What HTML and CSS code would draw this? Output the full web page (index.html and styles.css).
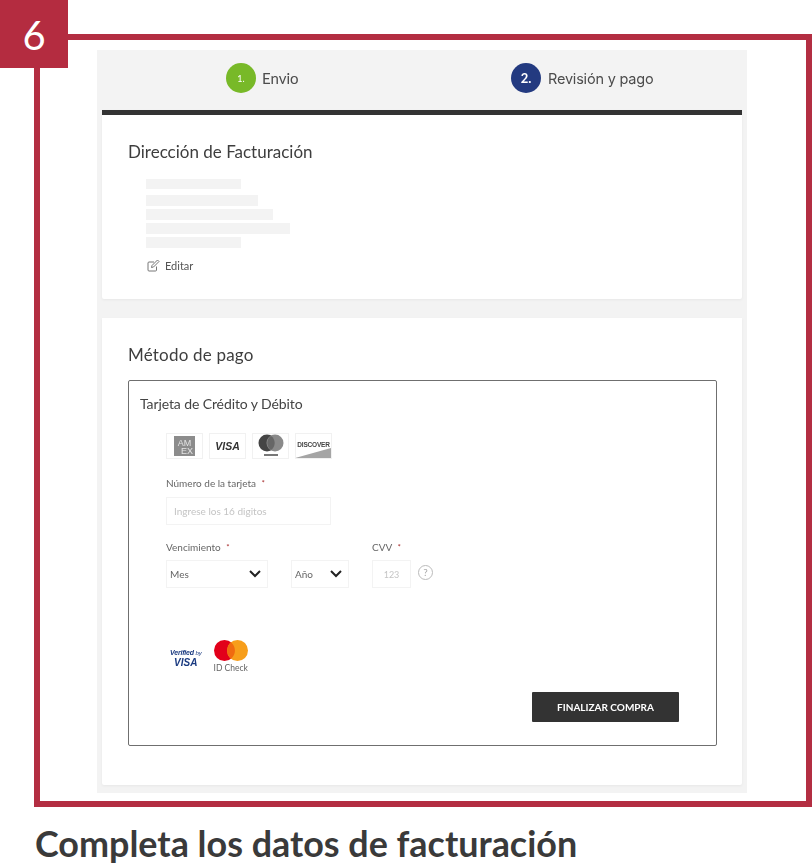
FILE: index.html
```html
<!DOCTYPE html>
<html lang="es">
<head>
<meta charset="utf-8">
<title>Completa los datos de facturación</title>
<link rel="stylesheet" href="styles.css">
</head>
<body>
<div class="badge">6</div>
<main class="frame">
  <div class="panel">
    <header class="steps">
      <div class="step step-one"><span class="dot dot-green">1.</span><span class="step-name">Envio</span></div>
      <div class="step step-two"><span class="dot dot-blue">2.</span><span class="step-name step-name-mont">Revisión y pago</span></div>
    </header>
    <section class="card card-address">
      <h2 class="card-title card-title-long">Dirección de Facturación</h2>
      <div class="address">
        <div class="line line-a"></div>
        <div class="line line-b"></div>
        <div class="line line-c"></div>
        <div class="line line-d"></div>
        <div class="line line-a"></div>
      </div>
      <div class="edit">
        <svg class="edit-icon" width="13" height="13" viewBox="0 0 13 13" fill="none" stroke="#777" stroke-width="1"><path d="M9.500 7.500v3.500a1 1 0 0 1-1 1h-6.500a1 1 0 0 1-1-1v-7a1 1 0 0 1 1-1h5"/><path d="M5 6.500l5.500-5.500 1.500 1.500-5.500 5.500-2 .5z"/></svg>
        <span>Editar</span>
      </div>
    </section>
    <section class="card card-pay">
      <h2 class="card-title">Método de pago</h2>
      <div class="pay-box">
        <h3 class="pay-title">Tarjeta de Crédito y Débito</h3>
        <div class="form">
          <div class="logos">
            <div class="logo">
              <svg width="21" height="20" viewBox="0 0 21 20"><rect width="21" height="20" fill="#8c8c8c"/><text x="10.500" y="9.500" class="amex" text-anchor="middle">AM</text><text x="13" y="18" class="amex" text-anchor="middle">EX</text></svg>
            </div>
            <div class="logo"><span class="visa">VISA</span></div>
            <div class="logo logo-mc">
              <svg width="28" height="24" viewBox="0 0 28 24"><circle cx="10" cy="9" r="8.500" fill="#444"/><circle cx="18" cy="9" r="8.500" fill="#8a8a8a"/><path d="M14 2a8.500 8.500 0 0 1 0 14a8.500 8.500 0 0 1 0-14z" fill="#666"/><rect x="7" y="20" width="14" height="2" fill="#777"/></svg>
            </div>
            <div class="logo logo-disc">
              <span class="discover">DISCOVER</span>
              <svg class="disc-wedge" width="36" height="10" viewBox="0 0 36 10"><path d="M0 10 36 0v10z" fill="#a5a5a5"/></svg>
            </div>
          </div>
          <label class="label label-card">Número de la tarjeta <i>*</i></label>
          <div class="field field-card">Ingrese los 16 digitos</div>
          <div class="expiry">
            <div class="col-month">
              <label class="label">Vencimiento <i>*</i></label>
              <div class="field select select-month"><span>Mes</span>
                <svg width="12" height="8" viewBox="0 0 12 8" fill="none" stroke="#222" stroke-width="2"><path d="M1 1l5 5 5-5"/></svg>
              </div>
            </div>
            <div class="col-year">
              <div class="field select select-year"><span>Año</span>
                <svg width="12" height="8" viewBox="0 0 12 8" fill="none" stroke="#222" stroke-width="2"><path d="M1 1l5 5 5-5"/></svg>
              </div>
            </div>
            <div class="col-cvv">
              <label class="label">CVV <i>*</i></label>
              <div class="cvv-row">
                <div class="field field-cvv">123</div>
                <span class="help">?</span>
              </div>
            </div>
          </div>
          <div class="secure">
            <div class="vbv"><em>Verified <small>by</small></em><strong>VISA</strong></div>
            <div class="idcheck">
              <svg width="34" height="21" viewBox="0 0 34 21"><circle cx="10.500" cy="10.500" r="10.500" fill="#e2001a"/><circle cx="23.500" cy="10.500" r="10.500" fill="#f79e1b"/><path d="M17 2.300a10.500 10.500 0 0 1 0 16.400a10.500 10.500 0 0 1 0-16.400z" fill="#f06a10"/></svg>
              <span>ID Check</span>
            </div>
          </div>
        </div>
        <div class="actions"><button class="buy" type="button">FINALIZAR COMPRA</button></div>
      </div>
    </section>
  </div>
</main>
<h1 class="caption">Completa los datos de facturación</h1>
</body>
</html>
```

FILE: styles.css
```css
* { box-sizing: border-box; }
html, body { margin: 0; padding: 0; }
body {
  position: relative;
  width: 812px;
  height: 865px;
  overflow: hidden;
  background: #fff;
  font-family: "Lato", "Liberation Sans", sans-serif;
  color: #444;
}
.badge {
  position: absolute;
  left: 0;
  top: 0;
  width: 68px;
  height: 68px;
  background: #b42c40;
  color: #fff;
  font-size: 40px;
  line-height: 70px;
  text-align: center;
  z-index: 1;
}
.frame {
  margin: 34px 0 0 34px;
  width: 778px;
  height: 773px;
  border: 6px solid #b32e42;
  padding: 10px 59px 0 57px;
}
.panel {
  background: #f3f3f3;
  height: 743px;
  padding: 0 5px;
  filter: blur(.35px);
}
.steps {
  height: 60px;
  display: flex;
  padding-bottom: 4px;
}
.step { display: flex; align-items: center; gap: 6px; }
.step-one { margin-left: 124px; width: 285px; }
.dot {
  width: 30px;
  height: 30px;
  border-radius: 50%;
  color: #fff;
  display: flex;
  align-items: center;
  justify-content: center;
}
.dot-green { background: #78b928; font-size: 9px; }
.dot-blue { background: #233a80; font-size: 13px; font-weight: 700; }
.step-two { gap: 7px; }
.step-name { font-size: 15px; color: #4c4c4c; }
.step-name-mont { font-family: "Inter", "Liberation Sans", sans-serif; font-size: 14.500px; letter-spacing: -.2px; }
.card {
  background: #fff;
  box-shadow: 0 1px 3px rgba(0,0,0,.05);
  border-radius: 0 0 2px 2px;
}
.card-address {
  height: 189px;
  border-top: 5px solid #333;
  padding: 27px 26px 0;
}
.card-title {
  margin: 0;
  font-size: 17px;
  font-weight: 400;
  line-height: 20px;
  color: #3e3e3e;
  letter-spacing: .2px;
}
.card-title-long { letter-spacing: 0; }
.address { margin: 17px 0 0 18px; display: flex; flex-direction: column; }
.line { height: 11px; background: #f3f3f3; margin-bottom: 3px; }
.line-a { width: 95px; }
.line-a:first-child { height: 10px; margin-bottom: 6px; }
.line-b { width: 112px; }
.line-c { width: 127px; }
.line-d { width: 144px; }
.edit {
  margin: 8px 0 0 19px;
  display: flex;
  align-items: center;
  gap: 5px;
  font-size: 11px;
  color: #555;
}
.card-pay {
  margin-top: 19px;
  height: 467px;
  padding: 27px 25px 0 26px;
}
.pay-box {
  margin-top: 15px;
  height: 366px;
  border: 1px solid #6f6f6f;
  border-radius: 2px;
  padding: 15px 11px 0;
  position: relative;
}
.pay-title {
  margin: 0;
  font-size: 14px;
  line-height: 16px;
  font-weight: 400;
  color: #444;
  letter-spacing: -.1px;
}
.form { padding-left: 26px; }
.logos { display: flex; gap: 6px; margin-top: 21px; }
.logo {
  width: 37px;
  height: 26px;
  border: 1px solid #f1f1f1;
  display: flex;
  align-items: center;
  justify-content: center;
  position: relative;
  overflow: hidden;
}
.amex { font-size: 9px; fill: #e4e4e4; font-family: "Liberation Sans", sans-serif; }
.visa { font-family: "Liberation Sans", sans-serif; font-weight: 700; font-style: italic; font-size: 10.500px; color: #333; }
.discover { font-family: "Liberation Sans", sans-serif; font-weight: 700; font-size: 6.500px; color: #444; margin-top: -4px; letter-spacing: -.2px; }
.disc-wedge { position: absolute; right: 0; bottom: 0; }
.label { display: block; font-size: 10px; line-height: 12px; color: #666; }
.label i { font-style: normal; color: #a33; margin-left: 3px; font-size: 8px; vertical-align: top; }
.label-card { margin-top: 18px; }
.field {
  border: 1px solid #f3f3f3;
  height: 28px;
  font-size: 10px;
  color: #c4c4c4;
  display: flex;
  align-items: center;
}
.field-card { width: 165px; margin-top: 8px; padding-left: 7px; }
.expiry { display: flex; align-items: flex-end; margin-top: 16px; }
.col-month { width: 125px; }
.col-month .label, .col-cvv .label { margin-bottom: 7px; }
.col-year { width: 81px; }
.select { justify-content: space-between; color: #666; font-size: 10px; padding: 0 6px 0 3px; }
.select-month { width: 102px; }
.select-year { width: 58px; }
.cvv-row { display: flex; align-items: center; gap: 7px; }
.field-cvv { width: 39px; justify-content: center; font-size: 9px; }
.help {
  width: 15px;
  height: 15px;
  border: 1.500px solid #bbb;
  border-radius: 50%;
  color: #aaa;
  font-size: 10px;
  line-height: 12px;
  text-align: center;
  margin-top: -3px;
}
.secure { display: flex; align-items: flex-start; gap: 12px; margin-top: 52px; padding-left: 4px; }
.vbv {
  display: flex;
  flex-direction: column;
  align-items: center;
  margin-top: 8px;
  color: #1a3a80;
  font-family: "Liberation Sans", sans-serif;
  line-height: 9px;
}
.vbv em { font-size: 7px; font-weight: 700; letter-spacing: -.2px; }
.vbv small { font-size: 6px; font-weight: 400; }
.vbv strong { font-size: 10px; font-style: italic; }
.idcheck { display: flex; flex-direction: column; align-items: center; font-size: 8.500px; color: #666; line-height: 12px; gap: 1px; }
.actions { position: absolute; right: 37px; top: 311px; }
.buy {
  width: 147px;
  height: 30px;
  border: 0;
  border-radius: 1px;
  background: #333;
  color: #fff;
  font-family: "Lato", sans-serif;
  font-size: 10px;
  font-weight: 700;
  padding: 0;
}
.caption {
  margin: 16px 0 0 35px;
  font-size: 35.900px;
  line-height: 42px;
  font-weight: 700;
  color: #3a3a3a;
  white-space: nowrap;
}
```
